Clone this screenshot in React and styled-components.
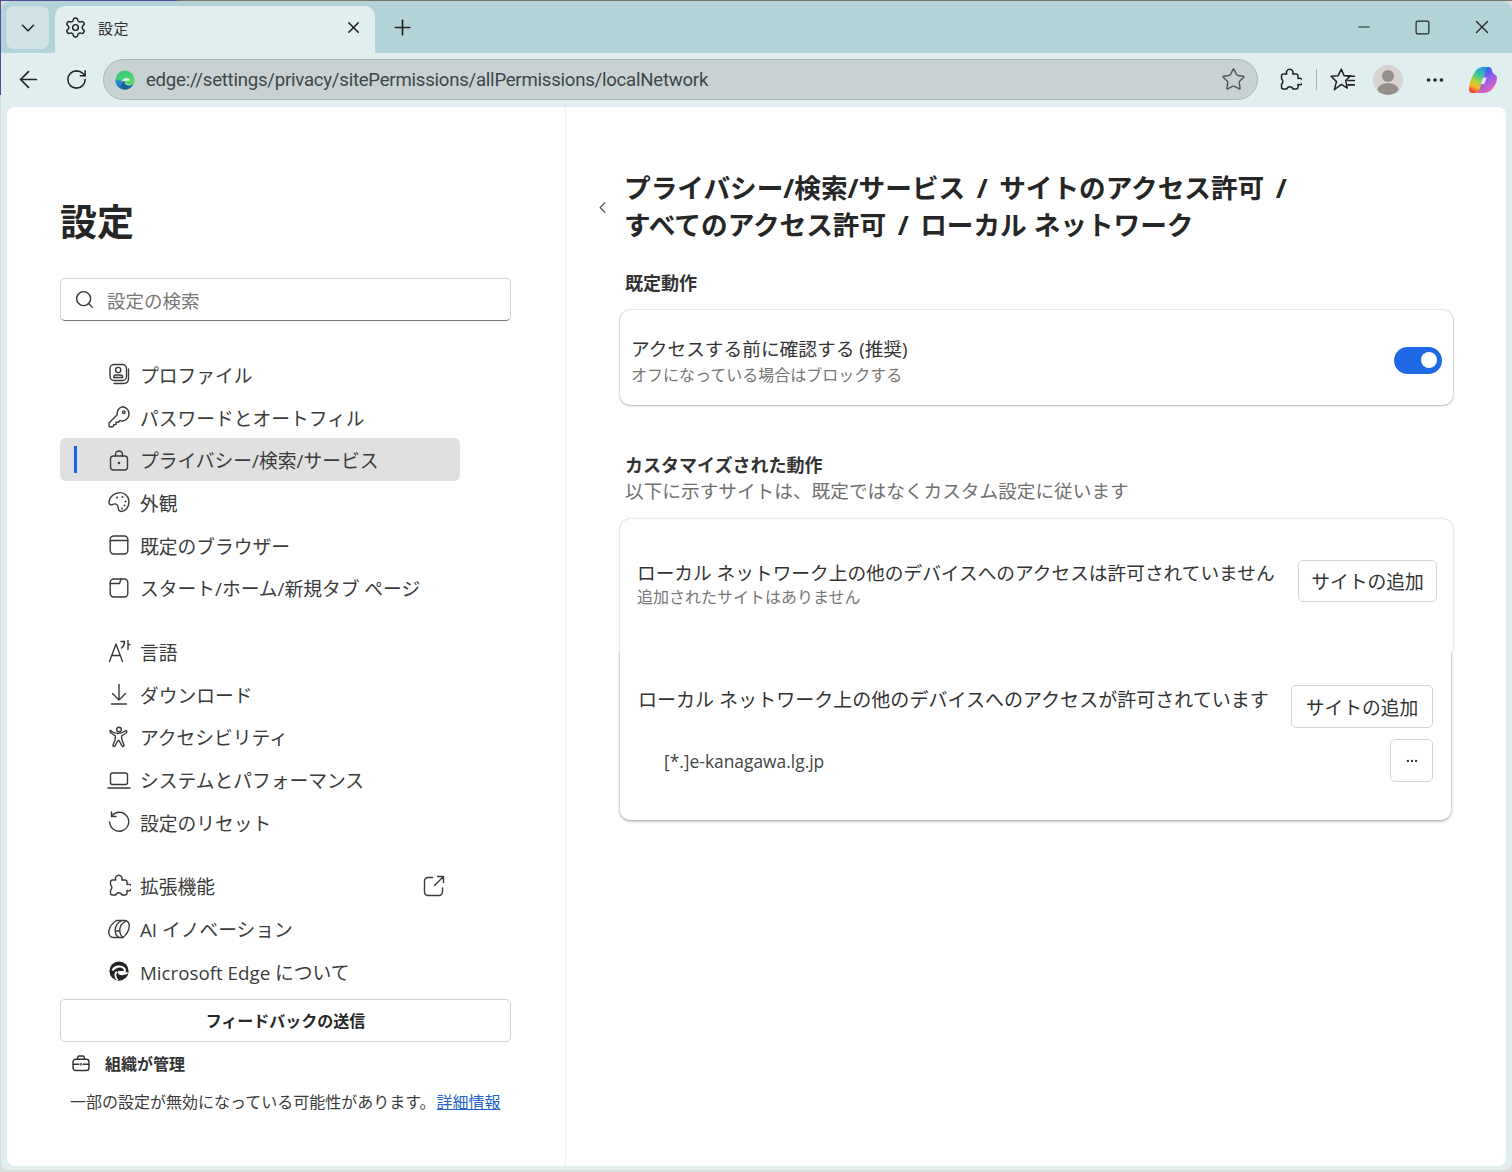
import styled, { createGlobalStyle } from "styled-components"
import { ArrowLeft, ChevronDown, ChevronLeft, Ellipsis, Minus, Plus, RotateCw, Search, Settings, Square, Star, X } from "lucide-react"

const GlobalStyle = createGlobalStyle`
    html, body {
        margin: 0;
        height: 100%;
        background: linear-gradient(90deg, #544c98 177px, #7c7868 177px) top left / 100% 1px no-repeat,
            linear-gradient(#544c98, #544c98) left top / 1px 95px no-repeat,
            #dcdcdc;
    }
    * {
        box-sizing: border-box;
    }
    body {
        font-family: "Open Sans", "Noto Sans CJK JP", sans-serif;
        color: #262626;
        overflow: hidden;
    }
`
const Window = styled.div`
    width: 1511px;
    height: 1169px;
    margin: 1px 0 0 1px;
    border-radius: 10px 10px 8px 8px;
    overflow: hidden;
    background: #e1eeef;
    display: flex;
    flex-direction: column;
`
const TabStrip = styled.div`
    height: 52px;
    flex: none;
    background: #b2d4d9;
    display: flex;
    align-items: flex-end;
    padding-left: 5px;
    color: #222;
`
const TabMenu = styled.div`
    width: 43px;
    height: 43px;
    margin-bottom: 4px;
    border-radius: 8px;
    background: #cfe3e6;
    display: flex;
    align-items: center;
    justify-content: center;
`
const Tab = styled.div`
    width: 320px;
    height: 47px;
    margin-left: 6px;
    border-radius: 10px 10px 0 0;
    background: #e1eeef;
    display: flex;
    align-items: center;
    padding: 0 12px 5px 9px;
    gap: 11px;
`
const TabTitle = styled.span`
    flex: 1;
    font-size: 15px;
    color: #333;
    letter-spacing: 0.5px;
`
const NewTab = styled.div`
    width: 54px;
    height: 47px;
    padding-bottom: 5px;
    display: flex;
    align-items: center;
    justify-content: center;
`
const Spacer = styled.div`
    flex: 1;
`
const WindowControls = styled.div`
    display: flex;
    align-self: stretch;
    align-items: center;
    margin-right: 1px;
`
const ControlButton = styled.div`
    width: 59px;
    display: flex;
    justify-content: center;
`
const Toolbar = styled.div`
    height: 54px;
    flex: none;
    display: flex;
    align-items: center;
    padding: 0 0 1px 3px;
    color: #222;
`
const ToolButton = styled.div`
    width: ${(p) => p.$w || 48}px;
    height: 41px;
    flex: none;
    display: flex;
    align-items: center;
    justify-content: center;
`
const AddressBar = styled.div`
    width: 1155px;
    height: 41px;
    margin: 0 6px 0 3px;
    flex: none;
    border-radius: 21px;
    background: #c9d2d3;
    border: 1px solid #a9b6b8;
    display: flex;
    align-items: center;
    padding: 0 11px 0 11px;
    gap: 11px;
`
const Url = styled.span`
    flex: 1;
    font-family: Roboto, sans-serif;
    font-size: 18.6px;
    letter-spacing: -0.24px;
    color: #3c474b;
    white-space: nowrap;
`
const ToolDivider = styled.div`
    width: 1px;
    height: 21px;
    background: #a8b4b6;
    flex: none;
`
const Avatar = styled.div`
    width: 30px;
    height: 30px;
    border-radius: 50%;
    background: #d6d3d0;
    overflow: hidden;
    display: flex;
`
const Page = styled.div`
    flex: 1;
    min-height: 0;
    margin: 0 6px 4px 6px;
    border-radius: 8px;
    background: #fff;
    display: flex;
`
const Sidebar = styled.aside`
    width: 559px;
    flex: none;
    border-right: 1px solid #efefef;
    padding: 88px 53px 0;
`
const PageTitle = styled.h1`
    margin: 0;
    font-size: 37px;
    line-height: 54px;
    font-weight: 700;
    color: #262626;
`
const SearchBox = styled.div`
    width: 451px;
    height: 43px;
    margin-top: 29px;
    border: 1px solid #d4d4d4;
    border-bottom: 1px solid #757575;
    border-radius: 5px;
    display: flex;
    align-items: center;
    padding: 0 13px;
    gap: 12px;
    color: #333;
`
const SearchText = styled.span`
    font-size: 18.5px;
    color: #767676;
`
const NavGroup = styled.nav`
    margin-top: ${(p) => p.$top}px;
`
const NavRow = styled.div`
    width: 400px;
    height: 42.7px;
    position: relative;
    border-radius: 6px;
    background: ${(p) => (p.$active ? "#e0e0e0" : "transparent")};
    display: flex;
    align-items: center;
    padding-left: 47px;
    gap: 9px;
    font-size: 18.75px;
    color: #3b3b3b;
`
const ActiveMark = styled.div`
    position: absolute;
    left: 14px;
    top: 8px;
    width: 3px;
    height: 27px;
    background: #1a66e8;
`
const NavIcon = styled.div`
    width: 24px;
    height: 24px;
    flex: none;
    display: flex;
    align-items: center;
    justify-content: center;
    color: #3a3a3a;
`
const ExternalMark = styled(NavIcon)`
    margin-right: 14px;
`
const NavLabel = styled.span`
    flex: 1;
    white-space: nowrap;
`
const FeedbackButton = styled.div`
    width: 451px;
    height: 43px;
    margin-top: 6px;
    border: 1px solid #d1d1d1;
    border-radius: 5px;
    display: flex;
    align-items: center;
    justify-content: center;
    font-size: 16px;
    font-weight: 700;
    color: #262626;
`
const ManagedRow = styled.div`
    margin-top: 9px;
    padding-left: 11px;
    height: 24px;
    display: flex;
    align-items: center;
    gap: 14px;
    font-size: 16px;
    font-weight: 700;
    color: #333;
`
const ManagedNote = styled.p`
    margin: 15px 0 0 10px;
    font-size: 16px;
    line-height: 24px;
    color: #3b3b3b;
    white-space: nowrap;
`
const MoreLink = styled.a`
    color: #2563c9;
    text-decoration: underline;
    margin-left: 1px;
`
const Main = styled.main`
    flex: 1;
    padding: 63px 0 0 0;
    display: flex;
    flex-direction: column;
`
const Breadcrumb = styled.div`
    display: flex;
    align-items: center;
    padding-left: 27px;
    gap: 12px;
    color: #555;
`
const BreadcrumbText = styled.h2`
    margin: 0;
    font-size: 26.65px;
    line-height: 37px;
    font-weight: 700;
    color: #262626;
    white-space: nowrap;
`
const Separator = styled.span`
    display: inline-block;
    width: 34px;
    text-align: center;
`
const SectionTitle = styled.h3`
    margin: ${(p) => p.$top}px 0 0 59px;
    font-size: 18px;
    line-height: 26px;
    font-weight: 700;
    color: #333;
`
const SectionHint = styled.p`
    margin: 0 0 0 59px;
    font-size: 18.67px;
    line-height: 26px;
    color: #6f6f6f;
`
const Card = styled.section`
    width: 833px;
    height: 95px;
    margin: 14px 0 0 54px;
    border-radius: 10px;
    background: #fff;
    box-shadow: 0 0 2px rgba(0, 0, 0, 0.3), 0 1px 2px rgba(0, 0, 0, 0.22);
    display: flex;
    align-items: center;
    justify-content: space-between;
    padding: 5px 11px 0 11px;
`
const CardText = styled.div`
    margin-top: 3px;
`
const RowTitle = styled.div`
    font-size: ${(p) => p.$size || 18.7}px;
    line-height: 26px;
    color: #333;
    white-space: nowrap;
`
const RowHint = styled.div`
    font-size: 16px;
    line-height: ${(p) => p.$line || 26}px;
    color: #767676;
    white-space: nowrap;
`
const Toggle = styled.div`
    width: 48px;
    height: 27px;
    border-radius: 14px;
    background: #1f68e6;
    display: flex;
    align-items: center;
    justify-content: flex-end;
    padding-right: 5px;
`
const ToggleKnob = styled.div`
    width: 16px;
    height: 16px;
    border-radius: 50%;
    background: #fff;
`
const ListWrap = styled.div`
    margin: 15px 0 0 54px;
`
const BlockedPanel = styled.section`
    width: 833px;
    height: 131px;
    border-radius: 10px 10px 0 0;
    background: #fff;
    box-shadow: 0 0 2px rgba(0, 0, 0, 0.32);
    clip-path: inset(-4px -4px 0 -4px);
    display: flex;
    align-items: flex-start;
    padding: 41px 16px 0 17px;
    justify-content: space-between;
`
const AllowedPanel = styled.section`
    width: 831px;
    height: 170px;
    border-radius: 0 0 10px 10px;
    background: #fff;
    box-shadow: 0 1px 3px rgba(0, 0, 0, 0.42);
    clip-path: inset(0 -4px -4px -4px);
    padding: 35px 18px 0 18px;
`
const PanelRow = styled.div`
    display: flex;
    justify-content: space-between;
    align-items: flex-start;
`
const PanelText = styled.div`
    padding-top: ${(p) => p.$top}px;
`
const OutlineButton = styled.div`
    width: ${(p) => p.$w}px;
    height: ${(p) => p.$h}px;
    flex: none;
    border: 1px solid #d5d5d5;
    border-radius: 5px;
    background: #fff;
    display: flex;
    align-items: center;
    justify-content: center;
    font-size: 18.8px;
    color: #333;
`
const SiteRow = styled.div`
    margin-top: 11px;
    display: flex;
    align-items: center;
    justify-content: space-between;
    padding-left: 26px;
    font-size: 17.4px;
    color: #444;
`

// outline glyphs for the settings menu
const Svg = ({ children, size = 24, sw = 1.4 }) => (
    <svg width={size} height={size} viewBox="0 0 24 24" fill="none" stroke="currentColor" strokeWidth={sw} strokeLinecap="round" strokeLinejoin="round">
        {children}
    </svg>
)
const ProfileIcon = () => (
    <Svg>
        <rect x="3" y="2.5" width="16.5" height="16" rx="4" />
        <circle cx="11.2" cy="8" r="2.6" />
        <path d="M6.8 15.5v-.6c0-1.2 1-1.9 2-1.9h4.8c1 0 2 .7 2 1.9v.6z" />
        <path d="M21.5 7v9.5c0 3-2 5-5 5H7" />
    </Svg>
)
const KeyIcon = () => (
    <Svg>
        <path d="M15 1.800a7 7 0 0 1 7 7 7 7 0 0 1-9 6.800l-1.600 1.700H9v2.300H6.700v1.200l-1 .9H3a1 1 0 0 1-1-1v-2.800l8.200-8.200A7 7 0 0 1 15 1.800z" />
        <circle cx="16.800" cy="7.200" r="1.300" />
    </Svg>
)
const LockIcon = () => (
    <Svg>
        <rect x="3.5" y="8" width="17" height="14" rx="3" />
        <path d="M8.5 8V6.500a3.500 3.500 0 0 1 7 0V8" />
        <circle cx="12" cy="15" r=".6" fill="currentColor" />
    </Svg>
)
const PaletteIcon = () => (
    <Svg>
        <path d="M13 2.600c5 0 9 4 9 9.200 0 5-3.600 9.700-7.500 9.700-2.600 0-3.200-1.800-3.200-3.400 0-2.400-1.400-4.200-3.600-4.200-1.400 0-2.300 1.200-3.600 1C2.800 14.700 2 13.500 2 12.300 2 7 7.500 2.600 13 2.600z" />
        <circle cx="10" cy="7.500" r="1" fill="currentColor" stroke="none" />
        <circle cx="15.500" cy="7" r="1" fill="currentColor" stroke="none" />
        <circle cx="18.500" cy="11.500" r="1" fill="currentColor" stroke="none" />
        <circle cx="17.500" cy="15.500" r="1" fill="currentColor" stroke="none" />
        <circle cx="15" cy="18.500" r="1" fill="currentColor" stroke="none" />
    </Svg>
)
const BrowserIcon = () => (
    <Svg>
        <rect x="3.200" y="3" width="17.600" height="18" rx="3.500" />
        <path d="M3.200 7.500h17.600" />
    </Svg>
)
const StartIcon = () => (
    <Svg>
        <rect x="3.200" y="3" width="17.600" height="18" rx="3.500" />
        <path d="M3.200 7.500h9.300l1.500-4.500" />
    </Svg>
)
const LanguageIcon = () => (
    <Svg>
        <path d="M2.500 22.500 9 5l6.500 17.500M5 16.500h8" />
        <path d="M14 2.500h3.500c0 3-1 5-3 6.500M21 1.500v9M21 5.500h2" />
    </Svg>
)
const DownloadIcon = () => (
    <Svg>
        <path d="M12 2.500v15.500M5.500 11.500l6.500 6.500 6.500-6.500M4.500 22h15" />
    </Svg>
)
const AccessIcon = () => (
    <Svg>
        <circle cx="12" cy="4.500" r="2.300" />
        <path d="M4 5.500c-1.300.5-1 1.800 0 2.500l4.500 3-.5 4-2 5c-.5 1.500 1.300 2 2 .8l3-5.300h1l3 5.300c.7 1.200 2.500.7 2-.8l-2-5-.5-4 4.500-3c1-.7 1.300-2 0-2.500-2 1.500-4 3-8 3s-6-1.500-8-3z" />
    </Svg>
)
const LaptopIcon = () => (
    <Svg>
        <rect x="3.500" y="5" width="17" height="11.500" rx="2" />
        <path d="M1 20h22" />
    </Svg>
)
const ResetIcon = () => (
    <Svg>
        <path d="M5 5.500A9.500 9.500 0 1 1 2.700 12" />
        <path d="M4.500 2v4.500H9" />
    </Svg>
)
const PuzzleIcon = ({ size = 24, sw = 1.4 }) => (
    <Svg size={size} sw={sw}>
        <path d="M3.500 8a2 2 0 0 1 2-2h3.300a3.300 3.300 0 1 1 5.900 0H18a2 2 0 0 1 2 2v2.600a3.300 3.300 0 1 1 0 5.800V19a2 2 0 0 1-2 2h-3a3.300 3.300 0 0 0-6.300 0H5.500a2 2 0 0 1-2-2v-2.800a3.300 3.300 0 0 0 0-5.400z" />
    </Svg>
)
const ExternalIcon = () => (
    <Svg>
        <path d="M10.500 3.500H6A3.500 3.500 0 0 0 2.500 7v11A3.500 3.500 0 0 0 6 21.500h11a3.500 3.500 0 0 0 3.500-3.500v-4" />
        <path d="M15.500 2.500h6v6M21.500 2.500 12.500 11.500" />
    </Svg>
)
const AiIcon = () => (
    <Svg>
        <path d="M9.500 3.500h8c3 0 5.200 2.500 4.800 6-.5 4.500-3.300 8.500-6.300 11H6.500c-3 0-5-2.500-4.700-6C2.300 10 5.500 6 9.500 3.500z" />
        <path d="M14.500 3.500c-3.500 2-6 5.500-6.300 9-.2 3.500 1.300 6.500 3.800 8M19 4c-3.500 2-6 5-6.300 8.500-.1 3 1.100 6 3.300 8M8.300 14H13" />
    </Svg>
)
const EdgeMonoIcon = () => (
    <svg width="22" height="22" viewBox="0 0 24 24">
        <circle cx="12" cy="12" r="10.500" fill="#222" />
        <path d="M5 11.500C7 7 14 5.500 17.500 9c1.500 1.500 1.300 3.700-.5 4.200h-5c-.5 2 3 3.300 9.300.8" fill="none" stroke="#fff" strokeWidth="2.300" />
        <path d="M10 13c-3 1.500-2.500 6 .5 9" fill="none" stroke="#fff" strokeWidth="2" />
    </svg>
)
const BriefcaseIcon = () => (
    <Svg size={20} sw={1.7}>
        <rect x="2.500" y="7.500" width="19" height="13.500" rx="3" />
        <path d="M8 7.500V5.500a2 2 0 0 1 2-2h4a2 2 0 0 1 2 2v2M2.500 13.500h7M14.500 13.500h7M12 12.500v2" />
    </Svg>
)
const EdgeLogo = () => (
    <svg width="20" height="20" viewBox="0 0 24 24">
        <defs>
            <linearGradient id="edgeTop" x1="0" y1="0" x2="1" y2="1">
                <stop offset="0" stopColor="#33c481" />
                <stop offset="1" stopColor="#5fe05c" />
            </linearGradient>
            <linearGradient id="edgeLow" x1="0" y1="0" x2="1" y2="1">
                <stop offset="0" stopColor="#2b9ad8" />
                <stop offset="1" stopColor="#0f4f8f" />
            </linearGradient>
        </defs>
        <circle cx="12" cy="12" r="11.500" fill="url(#edgeTop)" />
        <path d="M.500 12c0 6.500 5 11.500 11.500 11.500 4.500 0 8-2.300 10-6-5 2.500-10 .5-10.500-3-3-2-8.500-3-11-2.500z" fill="url(#edgeLow)" />
        <path d="M8 15.500c0-4 3-6 6-6 2.500 0 4 1.500 4 3.300h-6c-1 3 3 6.200 10 4.200-2 4-6 6.500-10 6-3-1-4-4-4-7.500z" fill="#e1eeef" />
        <path d="M11.500 13.500c0 4 3.500 7 10.500 3.500-2 4-6 6.500-10 6.500-3 0-4.500-3-4.500-6s2-5 4-4z" fill="#14629e" />
    </svg>
)
const CopilotLogo = () => (
    <svg width="30" height="30" viewBox="0 0 30 30">
        <defs>
            <linearGradient id="copLeft" x1="0.75" y1="0" x2="0.35" y2="1">
                <stop offset="0" stopColor="#1f8fe6" />
                <stop offset="0.35" stopColor="#3fc6a0" />
                <stop offset="0.6" stopColor="#a8d43c" />
                <stop offset="0.8" stopColor="#f7b92a" />
                <stop offset="1" stopColor="#ee4a36" />
            </linearGradient>
            <linearGradient id="copRight" x1="0.3" y1="0" x2="0.7" y2="1">
                <stop offset="0" stopColor="#1a60e8" />
                <stop offset="0.45" stopColor="#8f5ff0" />
                <stop offset="1" stopColor="#f063a8" />
            </linearGradient>
        </defs>
        <path d="M18 2h2.500c1.800 0 3 1.200 3.500 3.200.5 2.200 1.300 3.400 2.800 4.300 1.300.8 2.500 2 2.200 4.500-.5 4.500-2.800 8.700-6 11.300-2 1.700-4.500 2.700-7.500 2.700H9z" fill="url(#copRight)" />
        <path d="M12.500 2.500C14 2 15 2 16.500 2H21c-1.500.5-2.700 2-3.400 4.200l-6 18C10.700 26.800 9 28 6.500 28h-2C2 28 .6 26 1 23c.7-6.500 3.200-12.500 6.500-17 1.400-1.800 3-3 5-3.500z" fill="url(#copLeft)" />
        <path d="M15.200 12.500h3.500l-2.400 6.500h-3.600z" fill="#dfe6f8" />
    </svg>
)
const AvatarFigure = () => (
    <svg width="30" height="30" viewBox="0 0 30 30">
        <circle cx="15" cy="11" r="6" fill="#948f8b" />
        <ellipse cx="15" cy="24.500" rx="10.500" ry="6.500" fill="#948f8b" />
    </svg>
)
const FavoritesIcon = () => (
    <Svg size={26} sw={1.4}>
        <path d="M10.500 2 13 8h6l-4.500 4.500 1.500 7-5.500-3.500L4 21l2-7.500L1 8.500l6.500-.5z" />
        <path d="M16 8.500h6.500M16.500 12.500h6M16.500 16.500h6" />
    </Svg>
)

const primaryItems = [
    { label: "プロファイル", icon: <ProfileIcon /> },
    { label: "パスワードとオートフィル", icon: <KeyIcon /> },
    { label: "プライバシー/検索/サービス", icon: <LockIcon />, active: true },
    { label: "外観", icon: <PaletteIcon /> },
    { label: "既定のブラウザー", icon: <BrowserIcon /> },
    { label: "スタート/ホーム/新規タブ ページ", icon: <StartIcon /> },
]
const systemItems = [
    { label: "言語", icon: <LanguageIcon /> },
    { label: "ダウンロード", icon: <DownloadIcon /> },
    { label: "アクセシビリティ", icon: <AccessIcon /> },
    { label: "システムとパフォーマンス", icon: <LaptopIcon /> },
    { label: "設定のリセット", icon: <ResetIcon /> },
]
const extraItems = [
    { label: "拡張機能", icon: <PuzzleIcon />, external: true },
    { label: "AI イノベーション", icon: <AiIcon /> },
    { label: "Microsoft Edge について", icon: <EdgeMonoIcon /> },
]

const NavList = ({ items, top }) => (
    <NavGroup $top={top}>
        {items.map((item) => (
            <NavRow key={item.label} $active={item.active}>
                {item.active && <ActiveMark />}
                <NavIcon>{item.icon}</NavIcon>
                <NavLabel>{item.label}</NavLabel>
                {item.external && <ExternalMark><ExternalIcon /></ExternalMark>}
            </NavRow>
        ))}
    </NavGroup>
)

const App = () => {
    return (
        <Window>
            <GlobalStyle />
            <TabStrip>
                <TabMenu><ChevronDown size={22} strokeWidth={1.6} /></TabMenu>
                <Tab>
                    <Settings size={23} strokeWidth={1.5} />
                    <TabTitle>設定</TabTitle>
                    <X size={19} strokeWidth={2} />
                </Tab>
                <NewTab><Plus size={25} strokeWidth={1.6} /></NewTab>
                <Spacer />
                <WindowControls>
                    <ControlButton><Minus size={18} strokeWidth={1.5} /></ControlButton>
                    <ControlButton><Square size={17} strokeWidth={1.7} /></ControlButton>
                    <ControlButton><X size={22} strokeWidth={1.5} /></ControlButton>
                </WindowControls>
            </TabStrip>
            <Toolbar>
                <ToolButton><ArrowLeft size={27} strokeWidth={1.5} /></ToolButton>
                <ToolButton><RotateCw size={23} strokeWidth={1.6} /></ToolButton>
                <AddressBar>
                    <EdgeLogo />
                    <Url>edge://settings/privacy/sitePermissions/allPermissions/localNetwork</Url>
                    <Star size={25} strokeWidth={1.4} color="#555" />
                </AddressBar>
                <ToolButton $w={52}><PuzzleIcon size={24} sw={1.5} /></ToolButton>
                <ToolDivider />
                <ToolButton $w={51}><FavoritesIcon /></ToolButton>
                <ToolButton $w={40}><Avatar><AvatarFigure /></Avatar></ToolButton>
                <ToolButton $w={54}><Ellipsis size={22} strokeWidth={2} /></ToolButton>
                <ToolButton $w={42}><CopilotLogo /></ToolButton>
            </Toolbar>
            <Page>
                <Sidebar>
                    <PageTitle>設定</PageTitle>
                    <SearchBox>
                        <Search size={21} strokeWidth={1.6} />
                        <SearchText>設定の検索</SearchText>
                    </SearchBox>
                    <NavList items={primaryItems} top={32} />
                    <NavList items={systemItems} top={21} />
                    <NavList items={extraItems} top={21} />
                    <FeedbackButton>フィードバックの送信</FeedbackButton>
                    <ManagedRow>
                        <BriefcaseIcon />
                        <span>組織が管理</span>
                    </ManagedRow>
                    <ManagedNote>
                        一部の設定が無効になっている可能性があります。<MoreLink>詳細情報</MoreLink>
                    </ManagedNote>
                </Sidebar>
                <Main>
                    <Breadcrumb>
                        <ChevronLeft size={19} strokeWidth={1.5} />
                        <BreadcrumbText>
                            プライバシー/検索/サービス<Separator>/</Separator>サイトのアクセス許可<Separator>/</Separator>
                            <br />
                            すべてのアクセス許可<Separator>/</Separator>ローカル ネットワーク
                        </BreadcrumbText>
                    </Breadcrumb>
                    <SectionTitle $top={26}>既定動作</SectionTitle>
                    <Card>
                        <CardText>
                            <RowTitle>アクセスする前に確認する (推奨)</RowTitle>
                            <RowHint>オフになっている場合はブロックする</RowHint>
                        </CardText>
                        <Toggle><ToggleKnob /></Toggle>
                    </Card>
                    <SectionTitle $top={47}>カスタマイズされた動作</SectionTitle>
                    <SectionHint>以下に示すサイトは、既定ではなくカスタム設定に従います</SectionHint>
                    <ListWrap>
                        <BlockedPanel>
                            <PanelText $top={0}>
                                <RowTitle>ローカル ネットワーク上の他のデバイスへのアクセスは許可されていません</RowTitle>
                                <RowHint $line={22}>追加されたサイトはありません</RowHint>
                            </PanelText>
                            <OutlineButton $w={139} $h={42}>サイトの追加</OutlineButton>
                        </BlockedPanel>
                        <AllowedPanel>
                            <PanelRow>
                                <PanelText $top={2}>
                                    <RowTitle $size={19.05}>ローカル ネットワーク上の他のデバイスへのアクセスが許可されています</RowTitle>
                                </PanelText>
                                <OutlineButton $w={142} $h={43}>サイトの追加</OutlineButton>
                            </PanelRow>
                            <SiteRow>
                                <span>[*.]e-kanagawa.lg.jp</span>
                                <OutlineButton $w={43} $h={43}><Ellipsis size={14} strokeWidth={2} /></OutlineButton>
                            </SiteRow>
                        </AllowedPanel>
                    </ListWrap>
                </Main>
            </Page>
        </Window>
    )
}

export default App
